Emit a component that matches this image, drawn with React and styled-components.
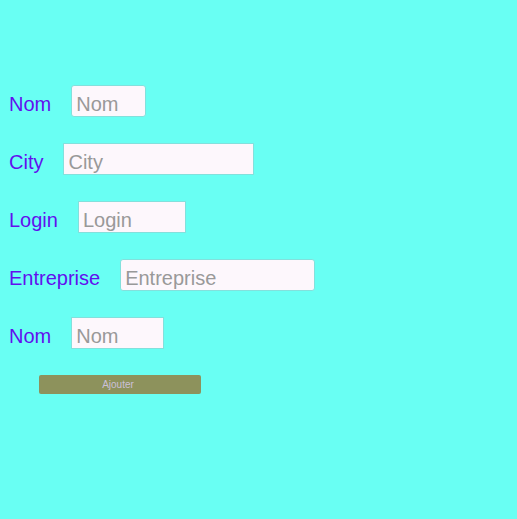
import React from "react";
import styled, { createGlobalStyle } from "styled-components";

const GlobalStyle = createGlobalStyle`
  body {
    margin: 0;
    background: #69fff3;
    font-family: "Liberation Sans", Arial, sans-serif;
  }
`;

const Form = styled.form`
  display: flex;
  flex-direction: column;
  align-items: flex-start;
  gap: 26px;
  padding: 85px 9px 26px;
`;

const Field = styled.div`
  display: flex;
  align-items: stretch;
  gap: 20px;
  height: 32px;
  max-width: 100%;
`;

const Label = styled.label`
  padding-top: 5px;
  color: #6210ee;
  font-size: 20px;
  line-height: 28px;
`;

const Input = styled.input`
  box-sizing: border-box;
  width: ${({ $width }) => $width}px;
  min-width: 0;
  padding: 6px 4px 0;
  border: 1px solid #83e0dc;
  border-radius: ${({ $rounded }) => ($rounded ? 3 : 0)}px;
  outline: 0;
  background: #fdf7fc;
  color: #555;
  font-family: inherit;
  font-size: 20px;
  line-height: 24px;

  &::placeholder {
    color: #999;
    opacity: 1;
  }
`;

const SubmitButton = styled.button`
  width: 162px;
  height: 19px;
  margin-left: 30px;
  padding: 0 4px 0 0;
  border: 0;
  border-radius: 2px;
  background: #8d925c;
  color: #cbc0d8;
  font-family: inherit;
  font-size: 10px;
  line-height: 20px;
`;

const fields = [
  { id: "nom", label: "Nom", width: 75, rounded: true },
  { id: "city", label: "City", width: 191, rounded: false },
  { id: "login", label: "Login", width: 108, rounded: false },
  { id: "entreprise", label: "Entreprise", width: 195, rounded: true },
  { id: "nom-2", label: "Nom", width: 93, rounded: false },
];

export default function App() {
  return (
    <>
      <GlobalStyle />
      <Form onSubmit={(event) => event.preventDefault()}>
        {fields.map(({ id, label, width, rounded }) => (
          <Field key={id}>
            <Label htmlFor={id}>{label}</Label>
            <Input
              id={id}
              name={id}
              type="text"
              placeholder={label}
              $width={width}
              $rounded={rounded}
            />
          </Field>
        ))}
        <SubmitButton type="submit">Ajouter</SubmitButton>
      </Form>
    </>
  );
}
